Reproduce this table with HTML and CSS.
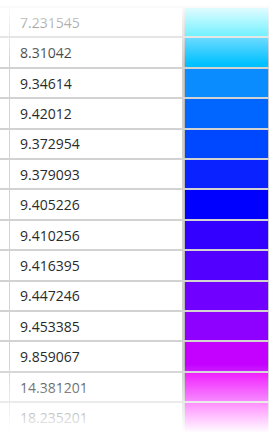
FILE: index.html
```html
<!DOCTYPE html>
<html>
<head>
<meta charset="utf-8">
<link rel="stylesheet" href="styles.css">
</head>
<body>
<div class="table">
  <div class="row"><div class="stub"></div><div class="val">7.231545</div><div class="sw"><div class="fill" style="background:#00e5ff"></div></div></div>
  <div class="row"><div class="stub"></div><div class="val">8.31042</div><div class="sw"><div class="fill" style="background:#00c0ff"></div></div></div>
  <div class="row"><div class="stub"></div><div class="val">9.34614</div><div class="sw"><div class="fill" style="background:#0a8cff"></div></div></div>
  <div class="row"><div class="stub"></div><div class="val">9.42012</div><div class="sw"><div class="fill" style="background:#0066ff"></div></div></div>
  <div class="row"><div class="stub"></div><div class="val">9.372954</div><div class="sw"><div class="fill" style="background:#0048ff"></div></div></div>
  <div class="row"><div class="stub"></div><div class="val">9.379093</div><div class="sw"><div class="fill" style="background:#0a22ff"></div></div></div>
  <div class="row"><div class="stub"></div><div class="val">9.405226</div><div class="sw"><div class="fill" style="background:#0000ff"></div></div></div>
  <div class="row"><div class="stub"></div><div class="val">9.410256</div><div class="sw"><div class="fill" style="background:#3300ff"></div></div></div>
  <div class="row"><div class="stub"></div><div class="val">9.416395</div><div class="sw"><div class="fill" style="background:#5200ff"></div></div></div>
  <div class="row"><div class="stub"></div><div class="val">9.447246</div><div class="sw"><div class="fill" style="background:#7000ff"></div></div></div>
  <div class="row"><div class="stub"></div><div class="val">9.453385</div><div class="sw"><div class="fill" style="background:#8e00ff"></div></div></div>
  <div class="row"><div class="stub"></div><div class="val">9.859067</div><div class="sw"><div class="fill" style="background:#c400ff"></div></div></div>
  <div class="row"><div class="stub"></div><div class="val">14.381201</div><div class="sw"><div class="fill" style="background:#ee00ff"></div></div></div>
  <div class="row"><div class="stub"></div><div class="val">18.235201</div><div class="sw"><div class="fill" style="background:#ff00ff"></div></div></div>
</div>
<div class="fade"></div>
</body>
</html>
```
FILE: styles.css
```css
html, body {
  margin: 0;
  padding: 0;
  background: #fff;
  width: 269px;
  height: 435px;
  overflow: hidden;
}
body {
  position: relative;
  font-family: "Open Sans", "Noto Sans", sans-serif;
}
.table {
  margin-top: 6px;
  border-top: 2px solid #d4d4d4;
  display: flex;
  flex-direction: column;
}
.row {
  display: flex;
  height: 30.42px;
  box-sizing: border-box;
  border-bottom: 2px solid #d2d2d2;
  flex-shrink: 0;
}
.stub {
  width: 9px;
  border-right: 1px solid #d4d4d4;
}
.val {
  width: 162px;
  padding-left: 10px;
  border-right: 2px solid #cfcfcf;
  display: flex;
  align-items: center;
  font-size: 14px;
  color: #2a2a2a;
}
.sw {
  width: 85px;
  display: flex;
}
.fill {
  flex: 1;
  border-left: 1px solid #b8b8b8;
  border-right: 1px solid #c4c4c4;
}
.fade {
  position: absolute;
  left: 0;
  top: 0;
  width: 269px;
  height: 435px;
  pointer-events: none;
  background: linear-gradient(to bottom,
    #fff 0px,
    rgba(255,255,255,0.45) 36px,
    rgba(255,255,255,0) 64px,
    rgba(255,255,255,0) 364px,
    #fff 433px);
}
```
